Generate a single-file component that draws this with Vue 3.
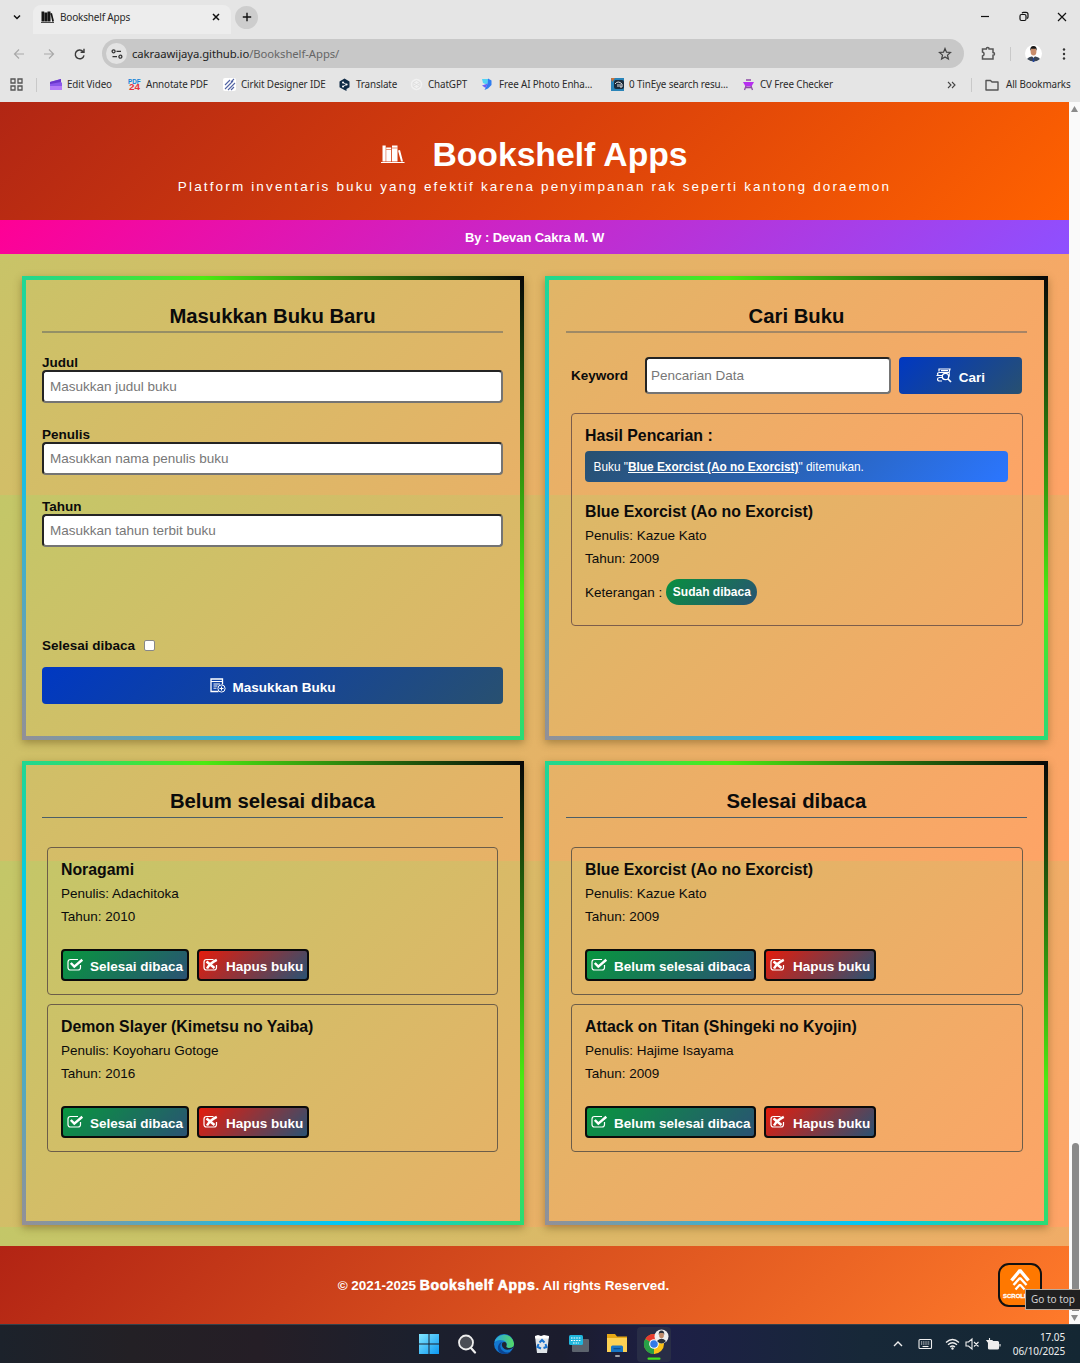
<script setup>
const bookmarks = [
  { id: 'edit', label: 'Edit Video', width: 79 },
  { id: 'pdf', label: 'Annotate PDF', width: 95 },
  { id: 'cirkit', label: 'Cirkit Designer IDE', width: 115 },
  { id: 'translate', label: 'Translate', width: 72 },
  { id: 'gpt', label: 'ChatGPT', width: 71 },
  { id: 'photo', label: 'Free AI Photo Enha...', width: 130 },
  { id: 'tineye', label: '0 TinEye search resu...', width: 131 },
  { id: 'cv', label: 'CV Free Checker', width: 100 },
]
const fields = [
  { label: 'Judul', hint: 'Masukkan judul buku' },
  { label: 'Penulis', hint: 'Masukkan nama penulis buku' },
  { label: 'Tahun', hint: 'Masukkan tahun terbit buku' },
]
const shelves = [
  {
    title: 'Belum selesai dibaca',
    action: 'Selesai dibaca',
    books: [
      { title: 'Noragami', author: 'Adachitoka', year: 2010 },
      { title: 'Demon Slayer (Kimetsu no Yaiba)', author: 'Koyoharu Gotoge', year: 2016 },
    ],
  },
  {
    title: 'Selesai dibaca',
    action: 'Belum selesai dibaca',
    books: [
      { title: 'Blue Exorcist (Ao no Exorcist)', author: 'Kazue Kato', year: 2009 },
      { title: 'Attack on Titan (Shingeki no Kyojin)', author: 'Hajime Isayama', year: 2009 },
    ],
  },
]
</script>

<template>
  <div class="screen">
    <header class="chrome">
      <div class="tabs">
        <svg class="chev" width="10" height="10" viewBox="0 0 10 10"><path d="M2 3.500l3 3 3-3" fill="none" stroke="#111" stroke-width="1.500" /></svg>
        <div class="tab">
          <svg width="13" height="12" viewBox="0 0 26 24"><path d="M1 1h5.500v20H1zM7 3h5.500v18H7zM13 1h6v20h-6zM19 5l3-1 4 16.500-3.500.8zM0 22h26v1.500H0z" fill="#151515" /></svg>
          <span>Bookshelf Apps</span>
          <svg class="tab-x" width="8" height="8" viewBox="0 0 8 8"><path d="M1 1l6 6M7 1L1 7" stroke="#111" stroke-width="1.500" /></svg>
        </div>
        <div class="plus"><svg width="10" height="10" viewBox="0 0 10 10"><path d="M5 .8v8.400M.8 5h8.400" stroke="#111" stroke-width="1.400" /></svg></div>
        <svg class="win" width="90" height="12" viewBox="0 0 90 12" fill="none" stroke="#111" stroke-width="1.200">
          <path d="M2 5.500h8" /><rect x="41" y="3.500" width="6" height="6" rx="1.500" /><path d="M43 2.200q.5-.8 1.500-.8h2.500q2 0 2 2V6q0 1-1 1.500" /><path d="M79 2l8 8M87 2l-8 8" />
        </svg>
      </div>
      <div class="address-row">
        <svg class="nav" width="76" height="14" viewBox="0 0 76 14" fill="none" stroke-width="1.200">
          <path d="M12 7H2.500M7 2.500L2.500 7 7 11.500" stroke="#a9a9a9" /><path d="M32 7h9.500M37 2.500L41.500 7 37 11.500" stroke="#a9a9a9" />
          <path d="M71 4.500A4.400 4.400 0 1 0 72 8.300M72 1.800v3.400h-3.400" stroke="#3a3a3a" stroke-width="1.400" />
        </svg>
        <div class="omni">
          <span class="site"><svg width="12" height="12" viewBox="0 0 12 12" fill="none" stroke="#333" stroke-width="1.300"><circle cx="2.600" cy="3.300" r="1.500" /><path d="M5.500 3.300H10M1.500 8.700H6" /><circle cx="9.400" cy="8.700" r="1.500" /></svg></span>
          <span class="url">cakraawijaya.github.io<i>/Bookshelf-Apps/</i></span>
          <svg class="star" width="14" height="14" viewBox="0 0 14 14"><path d="M7 1.500l1.500 3.700 4 .3-3 2.600.9 3.900L7 9.900 3.600 12l.9-3.900-3-2.600 4-.3z" fill="none" stroke="#444" stroke-width="1.200" /></svg>
        </div>
        <svg class="ext" width="15" height="15" viewBox="0 0 15 15"><path d="M1.500 3h3.800q0-1.500 1.400-1.500T8.100 3H12v3.500q1.500 0 1.500 1.400T12 9.300V13H1.500V10q1.600-.4 1.600-2T1.500 6z" fill="none" stroke="#555" stroke-width="1.500" /></svg>
        <i class="sep"></i>
        <svg class="avatar" width="17" height="17" viewBox="0 0 17 17"><circle cx="8.500" cy="8.500" r="8.500" fill="#fff" /><path d="M2 14q2-2.500 4.500-2.500h4Q14 12 15 14q-6 5-13 0z" fill="#3b4655" /><path d="M7 11h3l-1.500 2z" fill="#fff" /><path d="M8 13h1l.4 4H7.600z" fill="#2446a0" /><ellipse cx="8.500" cy="6.500" rx="2.900" ry="4" fill="#c98d6b" /><path d="M5.300 6Q4.800 1 8.500 1t3.200 5l-.8-2.200H6.200z" fill="#171717" /></svg>
        <svg width="4" height="14" viewBox="0 0 4 14" fill="#333"><circle cx="2" cy="2.500" r="1.200" /><circle cx="2" cy="7" r="1.200" /><circle cx="2" cy="11.500" r="1.200" /></svg>
      </div>
      <div class="marks">
        <svg class="apps" width="13" height="13" viewBox="0 0 13 13" fill="none" stroke="#555" stroke-width="1.300"><path d="M1 1h4v4H1zM8 1h4v4H8zM1 8h4v4H1zM8 8h4v4H8z" /></svg>
        <i class="sep"></i>
        <div v-for="b in bookmarks" :key="b.id" class="mark" :style="{ width: b.width + 'px' }">
          <svg width="13" height="13" viewBox="0 0 13 13">
            <template v-if="b.id === 'edit'"><path d="M1 4l11-3v3l1 1v7H1z" fill="#8a54ea" /><path d="M1 4l11-3v3L1 6z" fill="#6a35cd" /><path d="M1 8h12v4H1z" fill="#b57bf8" /></template>
            <template v-else-if="b.id === 'pdf'"><text x="0" y="5.500" font-size="6.500" textLength="12.500" lengthAdjust="spacingAndGlyphs" font-weight="900" fill="#1283d8">PDF</text><text x="1" y="12.300" font-size="8.500" textLength="11" lengthAdjust="spacingAndGlyphs" font-weight="900" fill="#e8323b">24</text></template>
            <template v-else-if="b.id === 'cirkit'"><rect width="13" height="13" rx="2" fill="#fff" /><path d="M2 7l5-5M2 11l8-8M5 12l7-7M8 4l3-3M8 12l3-3" stroke="#5365a5" stroke-width="1.100" /></template>
            <template v-else-if="b.id === 'translate'"><path d="M6.500.5l5 2.900v5.800l-3 1.800v2L6 11.800 1.500 9.200V3.400z" fill="#0f2b46" /><path d="M5 4.500L8.500 6.500 5 8.500" fill="none" stroke="#fff" stroke-width=".8" /><circle cx="5" cy="4.400" r="1" fill="#fff" /><circle cx="8.600" cy="6.400" r="1" fill="#fff" /><circle cx="5" cy="8.600" r="1" fill="#fff" /></template>
            <template v-else-if="b.id === 'gpt'"><circle cx="6.500" cy="6.500" r="5.700" fill="#f1f1f1" /><path d="M6.500 2.500l3.500 2v4l-3.500 2-3.500-2v-4zM3 4.500l7 4M10 4.500l-7 4" fill="none" stroke="#dcdcdc" stroke-width=".8" /></template>
            <template v-else-if="b.id === 'photo'"><path d="M1 1h6l-.5 6L2 5z" fill="#52d4f4" /><path d="M7 .5l3.500 2V7L7 10.500 3.500 12l3-6z" fill="#2f7df0" /><path d="M1 7.500l6-2-2.500 4.500z" fill="#6a62f5" /></template>
            <template v-else-if="b.id === 'tineye'"><rect width="13" height="13" fill="#2a84b8" /><rect x="3" y="2" width="10" height="9" rx="2" fill="#1b2b3a" /><path d="M4 6q3-4 7 0v3H9V6M7 6v3" fill="none" stroke="#e5e5e5" /><path d="M0 0h4L1 4z" fill="#cf7337" /></template>
            <template v-else><path d="M1 4h11l-2.500 4.500h-6z" fill="#b72ef0" /><path d="M4 2h5M4 8l-1.500 4M9 8l1.500 4M3.500 9.500h6" stroke="#8d4aa5" stroke-width="1.300" /></template>
          </svg>
          <span>{{ b.label }}</span>
        </div>
        <svg class="more" width="9" height="8" viewBox="0 0 9 8"><path d="M1 1l3 3-3 3M5 1l3 3-3 3" fill="none" stroke="#444" stroke-width="1.100" /></svg>
        <i class="sep sep2"></i>
        <svg class="folder" width="14" height="12" viewBox="0 0 14 12"><path d="M1 1.500h4.500L7 3h6v8H1z" fill="none" stroke="#555" stroke-width="1.400" stroke-linejoin="round" /></svg>
        <span class="all">All Bookmarks</span>
      </div>
    </header>

    <div class="viewport">
      <div class="page">
        <div class="hero">
          <div class="brand">
            <svg width="25" height="20" viewBox="0 0 25 20"><path d="M2.500 1.500h3.200v16H2.500zM6.200 3.500h5v14h-5zM12 1.500h5.500v16H12zM18 6.500l2-.5 3 11.500h-2zM1 18h23.500v1H1z" fill="#fff" /><path d="M6.200 5.500h5M12 4h5.500" stroke="#d9420d" stroke-width=".6" /></svg>
            <h1>Bookshelf Apps</h1>
          </div>
          <p>Platform inventaris buku yang efektif karena penyimpanan rak seperti kantong doraemon</p>
        </div>
        <div class="byline">By : Devan Cakra M. W</div>

        <main>
          <section class="panel">
            <h2>Masukkan Buku Baru</h2>
            <div v-for="f in fields" :key="f.label" class="field">
              <label>{{ f.label }}</label>
              <div class="input">{{ f.hint }}</div>
            </div>
            <div class="check"><span>Selesai dibaca</span><i></i></div>
            <div class="primary">
              <svg width="16" height="16" viewBox="0 0 16 16" fill="none" stroke="#fff"><path d="M8.500 13.500H1V1H12.500V6.500" stroke-width="1.300" /><path d="M1 3.500H12.500M3.500 6h6.500M3.500 8h4M3.500 10.200h3" stroke-width="1" /><circle cx="11.500" cy="10.500" r="3.600" /><path d="M11.500 8.500v4M9.500 10.500h4" /></svg>
              <span>Masukkan Buku</span>
            </div>
          </section>

          <section class="panel right">
            <h2>Cari Buku</h2>
            <div class="search">
              <label>Keyword</label>
              <div class="input">Pencarian Data</div>
              <div class="primary">
                <svg width="16" height="16" viewBox="0 0 16 16" fill="none" stroke="#fff"><path d="M3 3.500V1h11L13 4.500H3.500Q1.500 4.500 1.500 6T3.500 7.500H6M6 13H3.500Q1.500 13 1.500 11.300T3.500 9.500H6M.5 7.500h5M5 2.700h7" stroke-width="1.200" /><circle cx="9.500" cy="8.500" r="3.200" stroke-width="1.300" /><path d="M12 11l3 3" stroke-width="1.700" /><path d="M13.300 4.500v4" /></svg>
                <span>Cari</span>
              </div>
            </div>
            <div class="result">
              <h3>Hasil Pencarian :</h3>
              <div class="alert">Buku "<b>Blue Exorcist (Ao no Exorcist)</b>" ditemukan.</div>
              <h3>Blue Exorcist (Ao no Exorcist)</h3>
              <p>Penulis: Kazue Kato</p>
              <p>Tahun: 2009</p>
              <div class="status"><span>Keterangan :</span><b>Sudah dibaca</b></div>
            </div>
          </section>

          <section v-for="(s, i) in shelves" :key="s.title" class="panel shelf" :class="{ right: i === 1 }">
            <h2>{{ s.title }}</h2>
            <div class="books">
              <article v-for="b in s.books" :key="b.title">
                <h3>{{ b.title }}</h3>
                <p>Penulis: {{ b.author }}</p>
                <p>Tahun: {{ b.year }}</p>
                <div class="actions">
                  <div class="btn done">
                    <svg width="17" height="15" viewBox="0 0 17 15" fill="none" stroke="#fff"><path d="M11 1.500H3.500Q1 1.500 1 4v5.500Q1 12 3.500 12H11q2.500 0 2.500-2.500V7" stroke-width="1.200" /><path d="M3.800 5l3.500 3.600L15.300 1.800" stroke-width="2.500" /></svg>
                    <span>{{ s.action }}</span>
                  </div>
                  <div class="btn del">
                    <svg width="17" height="15" viewBox="0 0 17 15" fill="none" stroke="#fff"><path d="M10.500 1.500H3.500Q1 1.500 1 4v5.500Q1 12 3.500 12H11q2.500 0 2.500-2.500V7" stroke-width="1.200" /><path d="M3.500 3.500l8 6.500M13.800 1.800Q7 5 4 10.500" stroke-width="2.500" /></svg>
                    <span>Hapus buku</span>
                  </div>
                </div>
              </article>
            </div>
          </section>
        </main>

        <footer>
          <span class="copy">© 2021-2025 <b>Bookshelf Apps</b>. All rights Reserved.</span>
          <div class="top">
            <svg width="40" height="26" viewBox="0 0 40 26" fill="none" stroke="#fff"><path d="M11.500 15.500L19.500 6h1L28.500 15.500" stroke-width="3.400" /><path d="M13.500 20l6-6.500h1l6 6.500" stroke-width="2.400" /><path d="M15.500 24.500l4-4.500h1l4 4.500" stroke-width="2.200" /></svg>
            <span>SCROLL</span>
          </div>
        </footer>
      </div>
      <div class="scroll">
        <svg width="11" height="10" viewBox="0 0 11 10"><path d="M5.500 2L9 8H2z" fill="#8b8b8b" /></svg>
        <i></i>
        <svg width="11" height="12" viewBox="0 0 11 12"><path d="M2 3h7l-3.500 6z" fill="#8b8b8b" /></svg>
      </div>
      <div class="tip">Go to top</div>
    </div>

    <div class="taskbar">
      <div class="dock">
        <svg width="20" height="20" viewBox="0 0 20 20"><defs><linearGradient id="win" x1="0" y1="0" x2="1" y2="1"><stop stop-color="#82e6ff" /><stop offset="1" stop-color="#0c98f2" /></linearGradient></defs><path d="M0 0h9.500v9.500H0zM10.500 0H20v9.500h-9.500zM0 10.500h9.500V20H0zM10.500 10.500H20V20h-9.500z" fill="url(#win)" /></svg>
        <svg width="20" height="20" viewBox="0 0 20 20"><circle cx="9" cy="8.500" r="7" fill="#4a4d55" stroke="#eee" stroke-width="1.800" /><path d="M14 14l4 4.500" stroke="#eee" stroke-width="2.200" stroke-linecap="round" /></svg>
        <svg width="20" height="20" viewBox="0 0 20 20"><defs><linearGradient id="edge"><stop stop-color="#2aa7e5" /><stop offset="1" stop-color="#55da62" /></linearGradient></defs><circle cx="10" cy="10" r="10" fill="#1377cf" /><path d="M.5 8A10 10 0 0 1 20 9.500q0 4.500-4.700 4.500-4 0-2.800-2.500Q13.500 8 9.500 6.500 4 5 .5 8z" fill="url(#edge)" /><path d="M8 8Q4 13 9 17q4 3 8.500.2Q14 21 9 20q-6-2-5-7.500Q5 8.500 8 8z" fill="#0a4594" /><path d="M8.500 8.500q-2 4 2 6.500 3 2 8.500-1l.5-1.500q-2 1.700-5 1.500-3-.5-2-2.500.5-2-1-3.200-1.500-.8-3 .2z" fill="#20242f" /></svg>
        <svg width="20" height="20" viewBox="0 0 20 20"><path d="M3 2h14l-2 17H5z" fill="#dfe4e8" /><path d="M3 2l3-1 3 1 3-1 5 1-.4 2.500H3.300z" fill="#fff" /><path d="M7.500 8.500L10 6l2.500 2.500M13.500 10l1 3-3 1M6.500 10l-1 3 3.500 1.500" fill="none" stroke="#1973cf" stroke-width="2" /></svg>
        <svg class="wide" width="22" height="20" viewBox="0 0 22 20"><rect x="4" y="5" width="17" height="13" rx="1" fill="#5c636d" /><rect x="1" y="1" width="14" height="10" rx="1.500" fill="#20b6dc" /><path d="M3 4h10M3 6.500h10M5 9h6" stroke="#fff" stroke-width="1.200" stroke-dasharray="1.600 1" /></svg>
        <svg class="wide folder-app" width="22" height="26" viewBox="0 0 22 26"><path d="M1 3h8l2 2.500h10V20H1z" fill="#e6a815" /><path d="M1 7h20v14H1z" fill="#fcd154" /><path d="M5 21v-5q0-1.500 1.500-1.500h9q1.500 0 1.500 1.500v5z" fill="#1875c5" /><path d="M7.500 17h7v1.300h-7z" fill="#094f92" /><rect x="9" y="24" width="5" height="2" rx="1" fill="#a0a2aa" /></svg>
        <div class="active">
          <svg width="30" height="34" viewBox="0 0 30 34"><circle cx="15" cy="17" r="10" fill="#fbc116" /><path d="M15 17L6.300 12A10 10 0 0 1 23.700 12z" fill="#e63b2e" /><path d="M15 17L6.300 12A10 10 0 0 0 15 27z" fill="#27a047" /><path d="M15 17l8.600-5Q27 20 15 27z" fill="#fbc116" /><circle cx="15" cy="17" r="4.800" fill="#fff" /><circle cx="15" cy="17" r="3.800" fill="#3379e7" /><circle cx="22.500" cy="9.500" r="7" fill="#eee" /><ellipse cx="22.500" cy="8" rx="2.400" ry="3.300" fill="#bd8968" /><path d="M19.800 8q-.5-4.500 2.700-4.500T25.200 8l-.8-2h-3.800zM18 14q4.500-4.500 9 0-4.500 5-9 0z" fill="#29303a" /><rect x="8.500" y="30.500" width="13" height="2.200" rx="1" fill="#42e222" /></svg>
        </div>
      </div>
      <svg class="tray" width="110" height="14" viewBox="0 0 110 14" fill="none" stroke="#eee" stroke-width="1.100">
        <path d="M1 9l4-4 4 4" stroke-width="1.400" />
        <rect x="26" y="2.500" width="12.500" height="9" rx="1" /><path d="M28 5h9M28 7h9" stroke-dasharray="1 .8" /><path d="M29.500 9.500h6" />
        <path d="M53 5.500q6.500-6 13 0M55 7.800q4.500-4 9 0M57 10q2.500-2 5 0" stroke-width="1.300" /><circle cx="59.500" cy="11.500" r="1.200" fill="#eee" stroke="none" />
        <path d="M73 5h2.500L79 2v10l-3.500-3H73zM81 5l4.500 4.500M85.500 5L81 9.500" />
        <rect x="95.500" y="4.500" width="10" height="7.500" rx="1" fill="#eee" /><path d="M107 7v2.500M96.500 1v3M94 3.500h5l-2.500 3.500z" fill="#eee" />
      </svg>
      <div class="clock"><span>17.05</span><span>06/10/2025</span></div>
    </div>
  </div>
</template>

<style>
body { margin: 0; }
</style>

<style scoped>
* { box-sizing: border-box; }
h1, h2, h3, p { margin: 0; }
svg { display: block; flex: none; }
.screen { width: 1080px; height: 1363px; display: flex; flex-direction: column; overflow: hidden; font-family: "Liberation Sans", Arial, sans-serif; font-size: 13.5px; color: #0b0b0b; }

.chrome { height: 102px; flex: none; background: #e5e5e5; font-family: "Noto Sans", sans-serif; font-size: 10px; color: #2b2b2b; }
.tabs { height: 34px; display: flex; align-items: center; padding-left: 12px; }
.tab { display: flex; align-items: center; width: 198px; height: 29px; margin: 5px 0 0 11px; padding: 0 9px 5px 8px; background: #ededed; border-radius: 8px 8px 0 0; align-self: flex-end; }
.tab span { margin-left: 6px; letter-spacing: -.18px; }
.tab-x { margin-left: auto; margin-right: 2px; }
.plus { width: 23px; height: 23px; margin-left: 4px; border-radius: 50%; background: #cdcdcd; display: flex; align-items: center; justify-content: center; }
.win { margin-left: auto; margin-right: 11px; }
.address-row { height: 38px; display: flex; align-items: center; padding: 1px 14px 0 12px; }
.omni { width: 863px; height: 29px; margin-left: 14px; display: flex; align-items: center; border-radius: 15px; background: #c8c8c8; padding: 0 12px 0 4px; }
.site { width: 21px; height: 21px; border-radius: 50%; background: #e3e3e3; display: flex; align-items: center; justify-content: center; }
.url { margin-left: 5px; font-size: 11.3px; letter-spacing: -.07px; color: #222; position: relative; top: -.5px; }
.url i { font-style: normal; color: #666; }
.star { margin-left: auto; }
.ext { margin: 0 14px 0 17px; }
.sep { width: 1px; height: 14px; background: #c9c9c9; }
.avatar { margin: 0 20px 0 14px; }
.marks { height: 25px; display: flex; align-items: center; padding-left: 10px; white-space: nowrap; }
.marks .sep { margin: 0 12px 0 13px; }
.mark { display: flex; align-items: center; gap: 5px; flex: none; font-size: 9.850px; letter-spacing: -.13px; }
.mark svg { font-family: "Liberation Sans", sans-serif; letter-spacing: 0; overflow: visible; }
.mark span, .all { position: relative; top: -.5px; }
.more { margin-left: 105px; }
.marks .sep2 { margin: 0 13px 0 15px; }
.all { margin-left: 7px; font-size: 9.850px; letter-spacing: -.13px; }

.viewport { position: relative; flex: none; height: 1222px; display: flex; }
.page { width: 1069px; height: 1222px; display: flex; flex-direction: column; background: linear-gradient(135deg, #c3c768, #ffa366) 0 27px / 1069px 366px repeat-y; }
.hero { height: 118px; background: linear-gradient(135deg, #b12614, #d9400b 50%, #ff6200); color: #fff; display: flex; flex-direction: column; align-items: center; padding-top: 32px; }
.brand { display: flex; align-items: center; height: 40px; margin-left: -1px; }
.brand h1 { font-size: 33.700px; line-height: 40px; margin-left: 27px; margin-top: -1px; }
.hero p { font-size: 13.5px; line-height: 18px; margin-top: 4px; letter-spacing: 2.150px; white-space: nowrap; }
.byline { height: 34px; background: linear-gradient(135deg, #ff0095, #8e50ff); color: #fff; font-size: 13px; font-weight: bold; text-align: center; line-height: 35px; letter-spacing: -.08px; }
main { flex: 1; display: grid; grid-template-columns: 502px 503px; grid-template-rows: 464px 464px; gap: 21px; padding: 22px 0 0 22px; }
.panel { border: 4px solid; border-image: linear-gradient(45deg, #929097, #00c8f5 33.300%, #4cea12 66.700%, #080808) 1; box-shadow: 0 3px 8px rgba(90, 70, 20, .45); padding: 20px 17px 0 16px; }
.right { padding: 20px 17px 0 17px; }
h2 { height: 33px; font-size: 20.300px; line-height: 32px; text-align: center; border-bottom: 2px solid rgba(90, 95, 100, .5); }
.shelf h2 { border-bottom: 1px solid #4b5e68; line-height: 33px; }
.field { margin-top: 23px; }
h2 + .field { margin-top: 21px; }
label { display: block; line-height: 16px; height: 16px; font-weight: bold; }
.input { height: 33px; padding-left: 6px; background: #fff; border: 2px solid; border-color: #242424 #747474 #747474 #242424; border-radius: 4px; color: #777; line-height: 29px; }
.check { display: flex; align-items: center; height: 16px; margin-top: 91px; font-weight: bold; line-height: 16px; }
.check span { margin-top: -1px; }
.check i { width: 11px; height: 11px; margin-left: 9px; margin-top: -1px; background: #fff; border: 1px solid #888; border-radius: 2px; }
.primary { height: 37px; margin-top: 13px; display: flex; align-items: center; justify-content: center; gap: 7px; border-radius: 4px; background: linear-gradient(135deg, #0038c2, #285070); color: #fff; font-weight: bold; }
.primary span { padding-top: 3px; }
.search { display: flex; align-items: center; margin: 24px 5px 0; }
.search label { width: 74px; }
.search .input { width: 246px; height: 37px; padding-left: 4px; line-height: 33px; }
.search .primary { width: 123px; margin: 0 0 0 8px; }
.field label { line-height: 17px; }
.result { height: 213px; margin: 19px 4px 0 5px; padding: 12px 14px 0 13px; border: 1px solid #7c5d4b; border-radius: 4px; }
h3 { font-size: 15.850px; line-height: 20px; white-space: nowrap; }
.alert { height: 31px; margin: 5px 0 20px; padding-left: 8.500px; border-radius: 4px; background: linear-gradient(135deg, #28506f, #2b76ff); color: #fff; font-size: 11.850px; line-height: 32px; }
.alert b { text-decoration: underline; }
.result p, article p { line-height: 23px; white-space: nowrap; }
h3 + p { padding-top: 2px; }
.result p + p, article p + p { margin-top: -.5px; }
.status { display: flex; align-items: center; height: 26px; margin-top: 9.500px; }
.status b { width: 91px; height: 26px; margin-left: 4px; border-radius: 13px; background: linear-gradient(135deg, #08903f, #2a5273); color: #fff; font-size: 12px; line-height: 27px; text-align: center; }
.books { display: flex; flex-direction: column; gap: 9px; margin: 29px 5px 0 5px; }
.right .books { margin-right: 4px; }
article { height: 148px; padding: 12px 13px 0; border: 1px solid #6c5d49; border-radius: 4px; }
.actions { display: flex; gap: 8px; margin-top: 21.500px; }
.btn { height: 32px; display: flex; align-items: center; gap: 6px; padding: 0 4px; border: 2px solid #0b0b0b; border-radius: 4px; color: #fff; font-weight: bold; white-space: nowrap; }
.right .btn { padding-right: 3.500px; }
.btn span { padding-top: 3px; }
.done { background: linear-gradient(135deg, #08963f, #2a5273); }
.del { background: linear-gradient(135deg, #e41c0c, #2a5273); }
footer { height: 78px; flex: none; position: relative; background: linear-gradient(135deg, #b22414, #d9501e 50%, #ff7a2a); color: #fff; display: flex; align-items: center; font-weight: bold; }
.copy { width: 1007px; text-align: center; font-size: 13.5px; }
.copy b { -webkit-text-stroke: .6px #fff; font-size: 14px; letter-spacing: .7px; }
.top { position: absolute; left: 998px; top: 17px; width: 44px; height: 44px; border: 2px solid #111; border-radius: 11px; background: #ff7800; font-size: 6px; }
.top span { display: block; margin: 2px 0 0 3px; font-weight: 900; -webkit-text-stroke: .3px #fff; }
.scroll { width: 11px; background: #fafafa; display: flex; flex-direction: column; }
.scroll svg:first-child { margin-top: 2px; }
.scroll i { width: 7px; height: 168px; margin: 1029px 0 0 3px; border-radius: 4px 4px 0 0; background: #8a8a8a; }
.scroll svg:last-child { margin-top: auto; }
.tip { position: absolute; left: 1025px; top: 1187px; width: 56px; height: 21px; background: #202020; border: 1px solid #b8aba0; color: #d0d0d0; font: 10px/19px "Noto Sans", sans-serif; padding-left: 5px; white-space: nowrap; }
.taskbar { height: 39px; flex: none; display: flex; align-items: center; border-top: 1px solid #35414a; background: linear-gradient(90deg, #1c222b, #232025 12%, #251e26 24%, #1c202d 38%, #1b1c2d 52%, #1d1f46 62%, #172838 80%, #142733); }
.dock { display: flex; align-items: center; gap: 17.500px; margin-left: 419px; }
.wide { margin: 0 -1px; }
.active { width: 34px; height: 35px; margin-left: -7px; background: #282d46; border-radius: 4px; display: flex; justify-content: center; }
.tray { margin-left: auto; }
.clock { width: 52px; margin-left: 10px; margin-right: 15px; display: flex; flex-direction: column; align-items: flex-end; white-space: nowrap; color: #eee; font: 10px/14px "Noto Sans", sans-serif; letter-spacing: -.1px; }
</style>
